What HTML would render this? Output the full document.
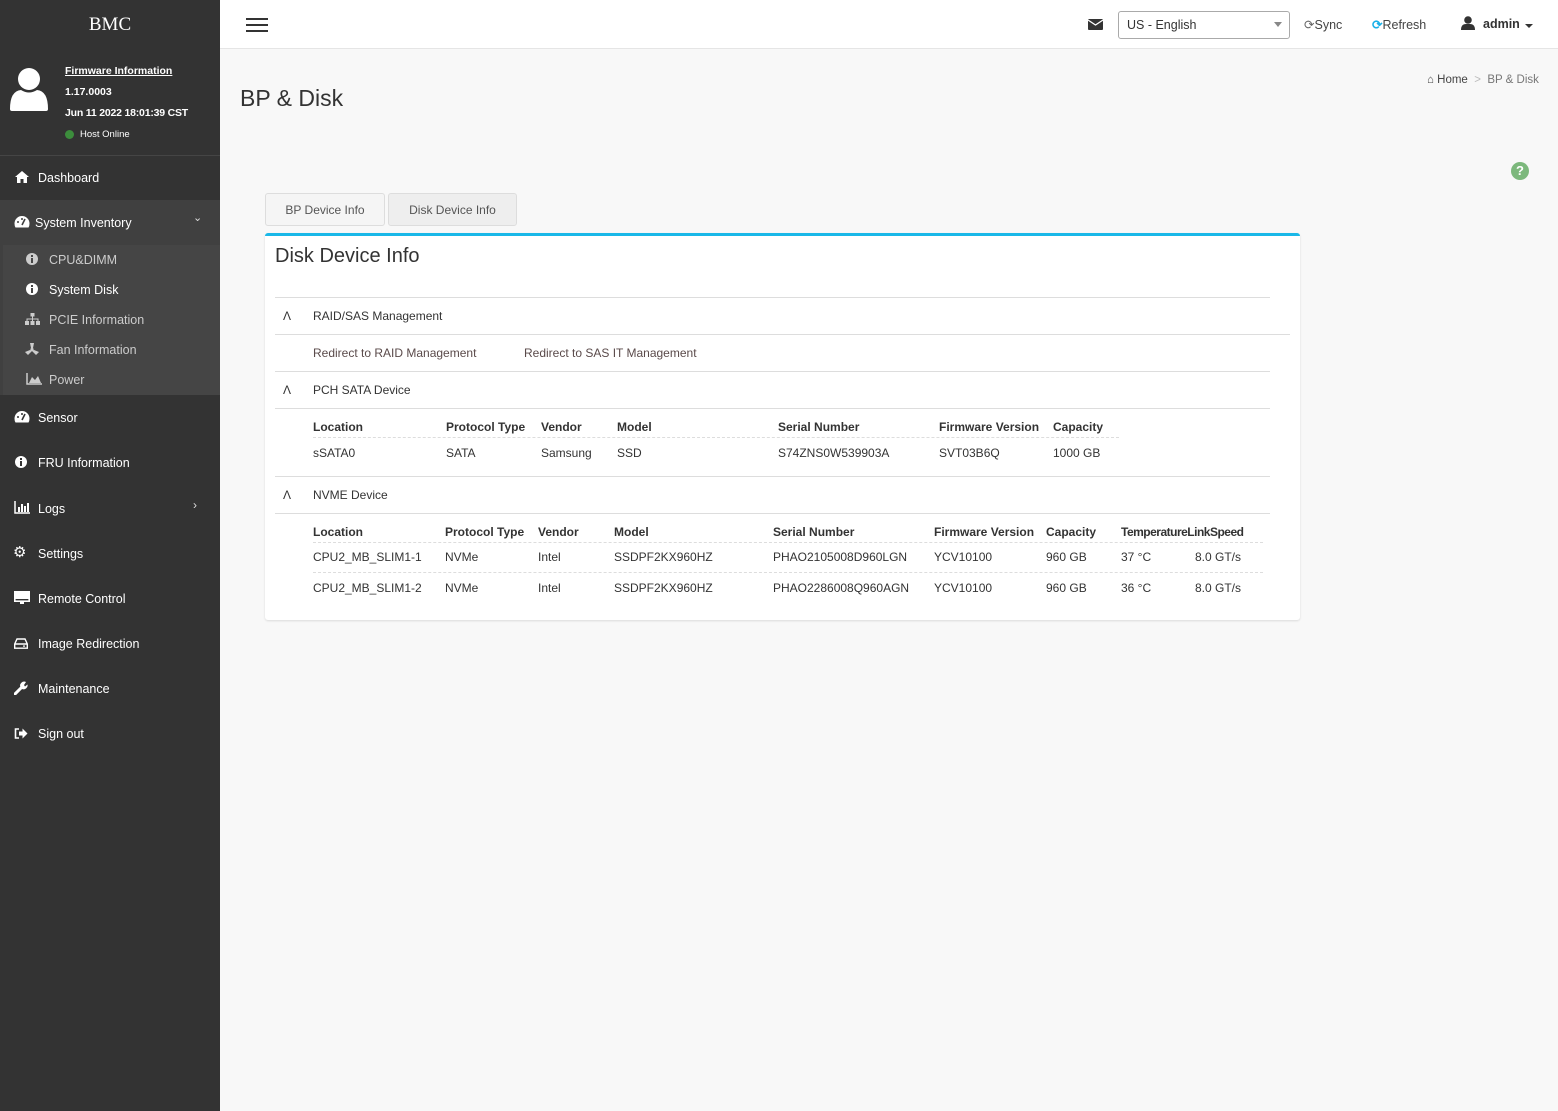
<!DOCTYPE html>
<html><head><meta charset="utf-8"><style>
*{box-sizing:border-box;margin:0;padding:0}
body{width:1558px;height:1111px;overflow:hidden;background:#f8f8f8;font-family:"Liberation Sans",sans-serif;position:relative;color:#333}
.a{position:absolute;white-space:nowrap}
#sb{position:absolute;left:0;top:0;width:220px;height:1111px;background:#333}
.nav{color:#fff;font-size:12.5px;margin-top:1px}
.sub{color:#ddd;font-size:12.5px;margin-top:1px}
.ic{position:absolute}
.line{position:absolute;height:1px;background:#ddd}
.dl{position:absolute;height:0;border-top:1px dashed #ddd}
.c{font-size:12px;color:#333;margin-top:1px}
.h{font-size:12px;color:#333;font-weight:bold;margin-top:1px}
</style></head><body>
<div id="sb">
  <div class="a" style="left:0;width:220px;top:14px;text-align:center;color:#fff;font-family:'Liberation Serif',serif;font-size:19px">BMC</div>
  <svg class="a" style="left:9px;top:67px" width="40" height="45" viewBox="0 0 40 45"><circle cx="20" cy="12" r="11" fill="#fff"/><path d="M1 42 Q1 24 12 23 Q20 28 28 23 Q39 24 39 42 Q39 44 37 44 L3 44 Q1 44 1 42Z" fill="#fff"/></svg>
  <div class="a" style="left:65px;top:65px;color:#fff;font-size:10.5px;font-weight:bold;text-decoration:underline">Firmware Information</div>
  <div class="a" style="left:65px;top:86px;color:#fff;font-size:10.5px;font-weight:bold">1.17.0003</div>
  <div class="a" style="left:65px;top:107px;color:#fff;font-size:10.5px;font-weight:bold;letter-spacing:-0.2px">Jun 11 2022 18:01:39 CST</div>
  <div class="a" style="left:65px;top:130px;width:9px;height:9px;border-radius:50%;background:#3c8d3c"></div>
  <div class="a" style="left:80px;top:129px;color:#fff;font-size:9.5px">Host Online</div>
  <div class="a" style="left:0;top:155px;width:220px;height:1px;background:#454545"></div>
  <div class="a" style="left:0;top:200px;width:220px;height:195px;background:#404040"></div>
  <div class="a" style="left:3px;top:245px;width:217px;height:150px;background:#454545"></div>

  <svg class="ic" style="left:15px;top:171px" width="14" height="12" viewBox="0 0 14 12"><path d="M7 0L14 6H12V12H8.5V8H5.5V12H2V6H0Z" fill="#fff"/></svg>
  <div class="a nav" style="left:38px;top:170px">Dashboard</div>
  <svg class="ic" style="left:14px;top:215px" width="16" height="13" viewBox="0 0 16 13"><path d="M8 1A7.5 7.5 0 0 0 .5 8.5Q.5 11 1.5 12.5H14.5Q15.5 11 15.5 8.5A7.5 7.5 0 0 0 8 1Z" fill="#fff"/><path d="M8 10L11 4" stroke="#404040" stroke-width="1.6"/><circle cx="4" cy="7" r="1" fill="#404040"/><circle cx="8" cy="4" r="1" fill="#404040"/></svg>
  <div class="a nav" style="left:35px;top:215px">System Inventory</div>
  <div class="a" style="left:193px;top:211px;color:#ddd;font-size:11px">&#8964;</div>

  <svg class="ic" style="left:26px;top:253px" width="12" height="12"><circle cx="6" cy="6" r="6" fill="#ccc"/><rect x="5" y="5" width="2" height="5" fill="#454545"/><rect x="5" y="2" width="2" height="2" fill="#454545"/></svg>
  <div class="a sub" style="left:49px;top:252px;color:#ccc">CPU&amp;DIMM</div>
  <svg class="ic" style="left:26px;top:283px" width="12" height="12"><circle cx="6" cy="6" r="6" fill="#fff"/><rect x="5" y="5" width="2" height="5" fill="#454545"/><rect x="5" y="2" width="2" height="2" fill="#454545"/></svg>
  <div class="a sub" style="left:49px;top:282px;color:#fff">System Disk</div>
  <svg class="ic" style="left:25px;top:313px" width="15" height="12"><rect x="5.5" y="0" width="4" height="3.5" fill="#ccc"/><path d="M7.5 3.5V6M2 8V6H13V8M7.5 6V8" stroke="#ccc" fill="none"/><rect x="0" y="8" width="4" height="4" fill="#ccc"/><rect x="5.5" y="8" width="4" height="4" fill="#ccc"/><rect x="11" y="8" width="4" height="4" fill="#ccc"/></svg>
  <div class="a sub" style="left:49px;top:312px;color:#ccc">PCIE Information</div>
  <svg class="ic" style="left:25px;top:343px" width="14" height="12"><circle cx="7" cy="6.5" r="1.6" fill="#ccc"/><path d="M5 0H9L8 5H6Z M0 9L3 12L7 8L5 7Z M14 9L11 12L7 8L9 7Z" fill="#ccc"/></svg>
  <div class="a sub" style="left:49px;top:342px;color:#ccc">Fan Information</div>
  <svg class="a" style="left:26px;top:373px" width="16" height="12"><path d="M1 0V11H16" stroke="#ccc" fill="none" stroke-width="1.5"/><path d="M3 10L6 4L9 7L12 3L15 10Z" fill="#ccc"/></svg>
  <div class="a sub" style="left:49px;top:372px;color:#ccc">Power</div>

  <svg class="ic" style="left:14px;top:410px" width="16" height="13" viewBox="0 0 16 13"><path d="M8 1A7.5 7.5 0 0 0 .5 8.5Q.5 11 1.5 12.5H14.5Q15.5 11 15.5 8.5A7.5 7.5 0 0 0 8 1Z" fill="#fff"/><path d="M8 10L11 4" stroke="#333" stroke-width="1.6"/><circle cx="4" cy="7" r="1" fill="#333"/><circle cx="8" cy="4" r="1" fill="#333"/></svg>
  <div class="a nav" style="left:38px;top:410px">Sensor</div>
  <svg class="ic" style="left:15px;top:456px" width="12" height="12"><circle cx="6" cy="6" r="6" fill="#fff"/><rect x="5" y="5" width="2" height="5" fill="#333"/><rect x="5" y="2" width="2" height="2" fill="#333"/></svg>
  <div class="a nav" style="left:38px;top:455px">FRU Information</div>
  <svg class="ic" style="left:14px;top:501px" width="16" height="13"><path d="M1 0V12H16" stroke="#fff" fill="none" stroke-width="1.5"/><rect x="4" y="6" width="2" height="5" fill="#fff"/><rect x="7" y="3" width="2" height="8" fill="#fff"/><rect x="10" y="5" width="2" height="6" fill="#fff"/><rect x="13" y="2" width="2" height="9" fill="#fff"/></svg>
  <div class="a nav" style="left:38px;top:501px">Logs</div>
  <div class="a" style="left:193px;top:498px;color:#ddd;font-size:12px">&#8250;</div>
  <div class="ic" style="left:13px;top:543px;color:#fff;font-size:15px">&#9881;</div>
  <div class="a nav" style="left:38px;top:546px">Settings</div>
  <svg class="ic" style="left:14px;top:591px" width="16" height="14"><rect x="0.8" y="0.8" width="14.4" height="9.4" fill="none" stroke="#fff" stroke-width="1.6"/><rect x="1" y="1" width="14" height="7" fill="#fff"/><rect x="6" y="10" width="4" height="3" fill="#fff"/></svg>
  <div class="a nav" style="left:38px;top:591px">Remote Control</div>
  <svg class="ic" style="left:14px;top:638px" width="14" height="11"><path d="M3 1H11L13.3 6V10.2H.7V6Z M.7 6H13.3" fill="none" stroke="#fff" stroke-width="1.4"/><rect x="9" y="7.5" width="2" height="1.2" fill="#fff"/></svg>
  <div class="a nav" style="left:38px;top:636px">Image Redirection</div>
  <svg class="ic" style="left:14px;top:681px" width="14" height="14"><path d="M1 13L8 6" stroke="#fff" stroke-width="3" stroke-linecap="round"/><path d="M7 7A4 4 0 0 1 12 1L10 4L11 5.5L13.5 3.5A4 4 0 0 1 8 8Z" fill="#fff"/></svg>
  <div class="a nav" style="left:38px;top:681px">Maintenance</div>
  <svg class="ic" style="left:14px;top:728px" width="14" height="11"><path d="M5 1H1.5V10H5" fill="none" stroke="#fff" stroke-width="1.6"/><path d="M5 3.5H8.5V0.5L13.5 5.5L8.5 10.5V7.5H5Z" fill="#fff"/></svg>
  <div class="a nav" style="left:38px;top:726px">Sign out</div>
</div>
<div class="a" style="left:220px;top:0;width:1338px;height:49px;background:#fff;border-bottom:1px solid #e5e5e5"></div>
<div class="a" style="left:246px;top:18px;width:22px;height:2px;background:#333;box-shadow:0 6px 0 #333,0 12px 0 #333"></div>
<svg class="a" style="left:1088px;top:19px" width="15" height="11"><rect width="15" height="11" rx="1" fill="#333"/><path d="M0 1L7.5 6L15 1" stroke="#fff" fill="none" stroke-width="1.3"/></svg>
<div class="a" style="left:1118px;top:11px;width:172px;height:28px;border:1px solid #aaa;border-radius:3px;background:#fff"></div>
<div class="a" style="left:1127px;top:18px;font-size:12.5px">US - English</div>
<div class="a" style="left:1274px;top:22px;border-left:4px solid transparent;border-right:4px solid transparent;border-top:5px solid #888"></div>
<div class="a" style="left:1304px;top:17px;font-size:12.5px;color:#444"><span style="color:#666">&#10227;</span>Sync</div>
<div class="a" style="left:1372px;top:17px;font-size:12.5px;color:#444"><span style="color:#1ab0e8;font-weight:bold">&#10227;</span>Refresh</div>
<svg class="a" style="left:1461px;top:16px" width="14" height="14"><circle cx="7" cy="4" r="3.8" fill="#333"/><path d="M0 14Q0 8 5 8H9Q14 8 14 14Z" fill="#333"/></svg>
<div class="a" style="left:1483px;top:17px;font-size:12.5px;font-weight:bold;color:#333">admin</div>
<div class="a" style="left:1525px;top:24px;border-left:4px solid transparent;border-right:4px solid transparent;border-top:4px solid #333"></div>
<div class="a" style="left:240px;top:85px;font-size:23px;color:#333">BP &amp; Disk</div>
<div class="a" style="left:1427px;top:74px;font-size:11.5px;color:#444">&#8962; Home <span style="color:#bbb">&nbsp;&gt;&nbsp;</span> <span style="color:#777">BP &amp; Disk</span></div>
<div class="a" style="left:1511px;top:162px;width:18px;height:18px;border-radius:50%;background:#7cb87c;color:#fff;font-size:13px;font-weight:bold;text-align:center;line-height:18px">?</div>
<div class="a" style="left:265px;top:193px;width:120px;height:33px;border:1px solid #ddd;border-radius:3px;background:#f5f5f5;font-size:12px;color:#555;text-align:center;line-height:33px">BP Device Info</div>
<div class="a" style="left:388px;top:193px;width:129px;height:33px;border:1px solid #ddd;border-radius:3px;background:#eee;font-size:12px;color:#555;text-align:center;line-height:33px">Disk Device Info</div>
<div class="a" style="left:265px;top:233px;width:1035px;height:387px;background:#fff;border-top:3px solid #1ab8e8;border-radius:3px;box-shadow:0 1px 2px rgba(0,0,0,.12)"></div>
<div class="a" style="left:275px;top:245px;font-size:20px;color:#333">Disk Device Info</div>
<div class="line" style="left:275px;top:297px;width:995px"></div>
<div class="a c" style="left:283px;top:308px">&#923;</div><div class="a c" style="left:313px;top:308px">RAID/SAS Management</div>
<div class="line" style="left:275px;top:334px;width:1015px"></div>
<div class="a c" style="left:313px;top:345px;color:#5a4a4a">Redirect to RAID Management</div>
<div class="a c" style="left:524px;top:345px;color:#5a4a4a">Redirect to SAS IT Management</div>
<div class="line" style="left:275px;top:371px;width:995px"></div>
<div class="a c" style="left:283px;top:382px">&#923;</div><div class="a c" style="left:313px;top:382px">PCH SATA Device</div>
<div class="line" style="left:275px;top:408px;width:995px"></div>
<div class="a h" style="left:313px;top:419px">Location</div><div class="a h" style="left:446px;top:419px">Protocol Type</div><div class="a h" style="left:541px;top:419px">Vendor</div><div class="a h" style="left:617px;top:419px">Model</div><div class="a h" style="left:778px;top:419px">Serial Number</div><div class="a h" style="left:939px;top:419px">Firmware Version</div><div class="a h" style="left:1053px;top:419px">Capacity</div>
<div class="dl" style="left:313px;top:437px;width:806px"></div>
<div class="a c" style="left:313px;top:445px">sSATA0</div><div class="a c" style="left:446px;top:445px">SATA</div><div class="a c" style="left:541px;top:445px">Samsung</div><div class="a c" style="left:617px;top:445px">SSD</div><div class="a c" style="left:778px;top:445px">S74ZNS0W539903A</div><div class="a c" style="left:939px;top:445px">SVT03B6Q</div><div class="a c" style="left:1053px;top:445px">1000 GB</div>
<div class="line" style="left:275px;top:476px;width:995px"></div>
<div class="a c" style="left:283px;top:487px">&#923;</div><div class="a c" style="left:313px;top:487px">NVME Device</div>
<div class="line" style="left:275px;top:513px;width:995px"></div>
<div class="a h" style="left:313px;top:524px">Location</div><div class="a h" style="left:445px;top:524px">Protocol Type</div><div class="a h" style="left:538px;top:524px">Vendor</div><div class="a h" style="left:614px;top:524px">Model</div><div class="a h" style="left:773px;top:524px">Serial Number</div><div class="a h" style="left:934px;top:524px">Firmware Version</div><div class="a h" style="left:1046px;top:524px">Capacity</div><div class="a h" style="left:1121px;top:524px;letter-spacing:-0.5px">TemperatureLinkSpeed</div>
<div class="dl" style="left:313px;top:542px;width:950px"></div>
<div class="a c" style="left:313px;top:549px">CPU2_MB_SLIM1-1</div><div class="a c" style="left:445px;top:549px">NVMe</div><div class="a c" style="left:538px;top:549px">Intel</div><div class="a c" style="left:614px;top:549px">SSDPF2KX960HZ</div><div class="a c" style="left:773px;top:549px">PHAO2105008D960LGN</div><div class="a c" style="left:934px;top:549px">YCV10100</div><div class="a c" style="left:1046px;top:549px">960 GB</div><div class="a c" style="left:1121px;top:549px">37 °C</div><div class="a c" style="left:1195px;top:549px">8.0 GT/s</div>
<div class="dl" style="left:313px;top:572px;width:950px"></div>
<div class="a c" style="left:313px;top:580px">CPU2_MB_SLIM1-2</div><div class="a c" style="left:445px;top:580px">NVMe</div><div class="a c" style="left:538px;top:580px">Intel</div><div class="a c" style="left:614px;top:580px">SSDPF2KX960HZ</div><div class="a c" style="left:773px;top:580px">PHAO2286008Q960AGN</div><div class="a c" style="left:934px;top:580px">YCV10100</div><div class="a c" style="left:1046px;top:580px">960 GB</div><div class="a c" style="left:1121px;top:580px">36 °C</div><div class="a c" style="left:1195px;top:580px">8.0 GT/s</div>
</body></html>
